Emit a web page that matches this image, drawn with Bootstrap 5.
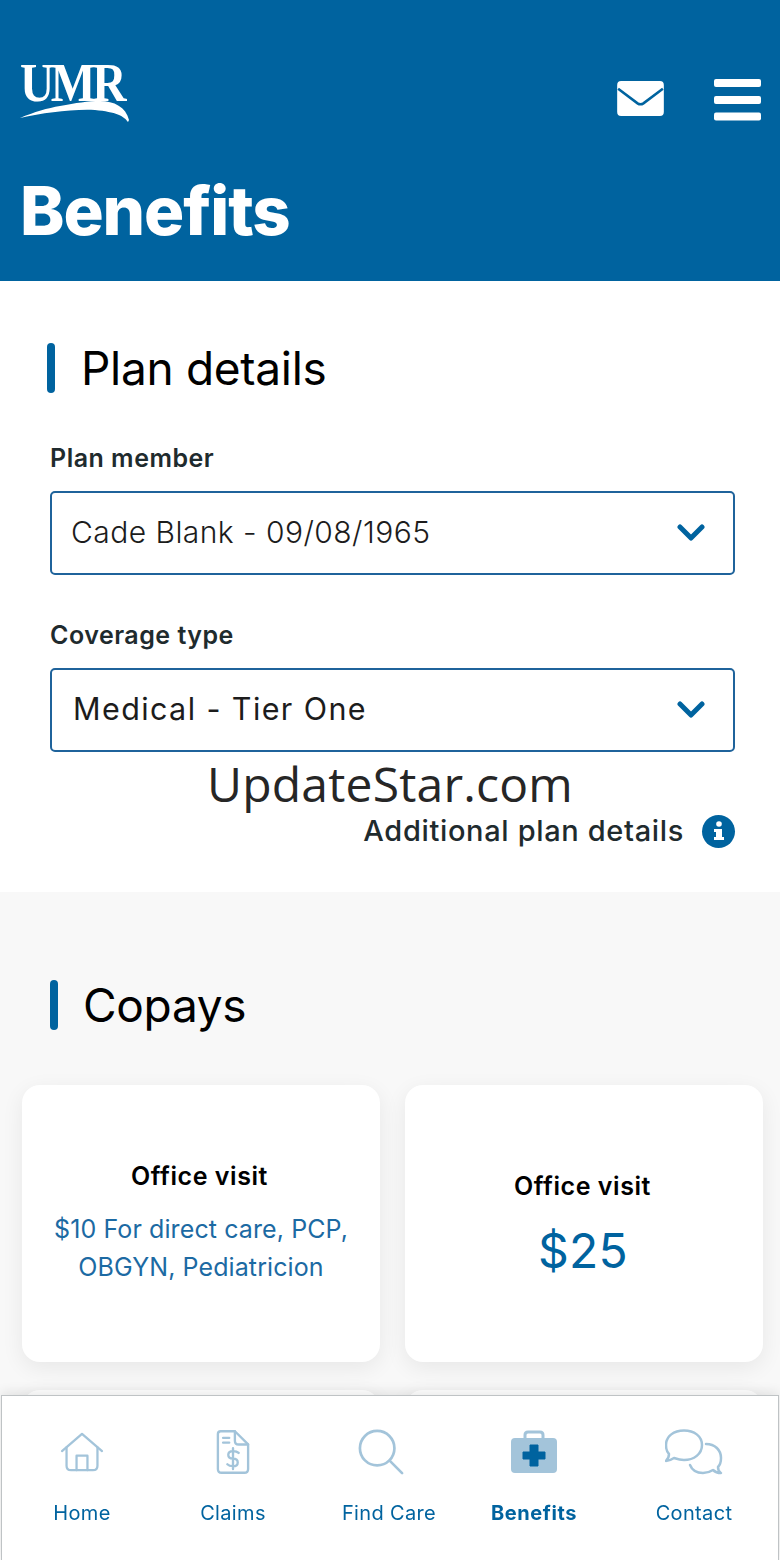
<!DOCTYPE html>
<html lang="en"><head><meta charset="utf-8"><title>Benefits</title>
<link href="https://cdn.jsdelivr.net/npm/bootstrap@5.3.0/dist/css/bootstrap.min.css" rel="stylesheet">
<style>
html,body{height:1560px;overflow:hidden}
body{width:780px;font-family:Inter,"Liberation Sans",sans-serif;background:#f8f8f8;position:relative;color:#000}
.app-head{height:281px;background:#00639f;padding:62px 19px 0 20px;color:#fff}
.logo-box{width:110px;height:60px;position:relative}
.logo-word{font-family:"Liberation Serif",serif;font-weight:700;font-size:54px;line-height:42px;letter-spacing:-4px;display:block;transform:scaleX(.88);transform-origin:left}
.logo-swoosh{position:absolute;left:0;top:30px}
.head-icons{gap:50px;margin-top:17px}
.env-ic{margin-top:2px}
.page-title{font-size:67px;font-weight:800;line-height:76px;letter-spacing:-1.1px;margin:51px 0 0;color:#fff}
.plan-sec{height:611px;background:#fff;padding:61px 45px 0 47px}
.sec-title{display:flex;align-items:center;gap:26px;font-size:46px;line-height:52px;font-weight:400;letter-spacing:-.3px;margin:0}
.sec-title::before{content:"";width:8px;height:50px;border-radius:4px;background:#00639f}
.fld-label{font-size:25px;font-weight:600;line-height:30px;color:#1f2b2e;margin:0 0 18px 3px;letter-spacing:.5px;display:block}
.fld-box{height:84px;width:685px;margin-left:3px;border:2px solid #1f639b;border-radius:5px;display:flex;align-items:center;justify-content:space-between;padding:0 28px 2px 19px;font-size:30.5px;color:#1c1c1c}
.fld-box svg{margin-top:2px}
.fld-one{margin-top:49px}
.fld-one .fld-box span{font-size:30px;font-weight:300;letter-spacing:.45px}
.fld-two{margin-top:45px}
.fld-two .fld-box span{margin-left:2px;letter-spacing:1.4px}
.wm{margin:2px 0 1px -2px;text-align:center;font-family:"Open Sans","Noto Sans",sans-serif;font-size:48px;line-height:60px;color:#262626;letter-spacing:.2px}
.more-row{margin-top:-2px;display:flex;align-items:center;justify-content:flex-end;gap:18px;font-size:29px;line-height:36px;font-weight:500;color:#1f2b2e;letter-spacing:.65px}
.info-dot{width:33px;height:33px;border-radius:50%;background:#00639f;color:#fff;display:flex;align-items:center;justify-content:center}
.copay-sec{padding:87px 17px 0 22px}
.copay-sec .sec-title{margin-left:28px;margin-bottom:54px;gap:25px}
.tile-row{display:grid;grid-template-columns:358px 358px;gap:25px}
.tile{height:277px;background:#fff;border:0;border-radius:18px;box-shadow:0 6px 22px rgba(0,0,0,.07);display:flex;flex-direction:column;align-items:center;justify-content:center;text-align:center}
.tile-left{padding-top:9px}
.tile-right{padding-top:17px}
.tile-h{font-size:25px;font-weight:600;letter-spacing:.55px;line-height:32px;color:#000;padding-right:3px}
.tile-txt{font-size:25px;line-height:38px;color:#1c6aa3;letter-spacing:.1px;margin-top:18px;margin-bottom:10px}
.tile-amt{font-size:48px;line-height:58px;color:#00639f;margin-top:20px;margin-bottom:14px;letter-spacing:.2px;padding-right:2px}
.tile-row.second{margin-top:28px}
.tile-row.second .tile{height:100px}
.tab-bar{position:fixed;left:1px;right:1px;top:1395px;height:165px;background:#fff;border:1px solid #bfc3c5;border-bottom:0;box-shadow:0 -4px 10px rgba(0,0,0,.08);display:grid;grid-template-columns:160px 142px 170px 120px 184px;padding-top:33px}
.tab-it{display:flex;flex-direction:column;align-items:center;font-size:20px;line-height:26px;color:#00639f;letter-spacing:.35px;white-space:nowrap}
.tab-slot{height:46px;margin-bottom:25px;display:flex;align-items:center;justify-content:center}
.tab-find svg{margin-right:16px}
.tab-last{padding-left:16px}
.tab-it.on span{font-weight:700;letter-spacing:.6px}
</style></head>
<body>
<header class="app-head">
  <div class="d-flex justify-content-between align-items-start">
    <div class="logo-box">
      <span class="logo-word">UMR</span>
      <svg class="logo-swoosh" width="112" height="32" viewBox="0 0 112 32"><path d="M0 26 C14 20 28 16 40 14 C56 11 68 9 80 9 C94 9 106 15 109 28 L108 30 C104 24 96 20 75 18 C50 17 24 21 0 26 Z" fill="#fff"/></svg>
    </div>
    <div class="d-flex head-icons align-items-start">
      <svg class="env-ic" width="47" height="35" viewBox="0 0 48 36"><rect width="48" height="36" rx="4" fill="#fff"/><path d="M1 8 L21 23 Q24 25 27 23 L47 8" fill="none" stroke="#00639f" stroke-width="2.6"/></svg>
      <svg width="47" height="42" viewBox="0 0 47 42"><g fill="#fff"><rect width="47" height="8" rx="2"/><rect y="17" width="47" height="8" rx="2"/><rect y="33.500" width="47" height="8" rx="2"/></g></svg>
    </div>
  </div>
  <h1 class="page-title">Benefits</h1>
</header>
<section class="plan-sec">
  <h2 class="sec-title">Plan details</h2>
  <div class="fld-one">
    <label class="fld-label">Plan member</label>
    <div class="fld-box"><span>Cade Blank - 09/08/1965</span><svg width="28" height="18" viewBox="0 0 28 18"><path d="M3 3 L14 14 L25 3" fill="none" stroke="#00639f" stroke-width="5" stroke-linecap="round" stroke-linejoin="round"/></svg></div>
  </div>
  <div class="fld-two">
    <label class="fld-label">Coverage type</label>
    <div class="fld-box"><span>Medical - Tier One</span><svg width="28" height="18" viewBox="0 0 28 18"><path d="M3 3 L14 14 L25 3" fill="none" stroke="#00639f" stroke-width="5" stroke-linecap="round" stroke-linejoin="round"/></svg></div>
  </div>
  <div class="wm">UpdateStar.com</div>
  <div class="more-row"><span>Additional plan details</span><span class="info-dot"><svg width="14" height="20" viewBox="0 0 14 20"><g fill="#fff"><circle cx="7" cy="3" r="2.800"/><path d="M2 8h8v8h2v3H2v-3h2v-5H2z"/></g></svg></span></div>
</section>
<section class="copay-sec">
  <h2 class="sec-title">Copays</h2>
  <div class="tile-row">
    <div class="card tile tile-left"><div class="tile-h">Office visit</div><div class="tile-txt">$10 For direct care, PCP,<br>OBGYN, Pediatricion</div></div>
    <div class="card tile tile-right"><div class="tile-h">Office visit</div><div class="tile-amt">$25</div></div>
  </div>
  <div class="tile-row second"><div class="card tile"></div><div class="card tile"></div></div>
</section>
<nav class="tab-bar">
  <div class="tab-it"><div class="tab-slot">
    <svg width="46" height="40" viewBox="0 0 48 44" fill="none" stroke="#a3c4da" stroke-width="2.500" stroke-linejoin="round" stroke-linecap="round"><path d="M2 21 L24 2 L46 21"/><path d="M7 17 V37 Q7 42 12 42 H36 Q41 42 41 37 V17"/><path d="M18 42 V26 H30 V42"/></svg></div>
    <span>Home</span></div>
  <div class="tab-it"><div class="tab-slot">
    <svg width="34" height="46" viewBox="0 0 36 48" fill="none" stroke="#a3c4da" stroke-width="2.500" stroke-linejoin="round" stroke-linecap="round"><path d="M5 2 H20 L34 16 V42 Q34 46 30 46 H6 Q2 46 2 42 V5 Q2 2 5 2 Z"/><path d="M20 2 V12 Q20 16 24 16 H34"/><path d="M7.500 9 H14 M7.500 14 H14"/><path d="M24 25 Q22 23 18 23 Q13 23 13 27 Q13 31 18 31 Q23 31 23 35 Q23 39 18 39 Q14 39 12 37 M18 20 V42"/></svg></div>
    <span>Claims</span></div>
  <div class="tab-it tab-find"><div class="tab-slot">
    <svg width="48" height="46" viewBox="0 0 48 48" fill="none" stroke="#a3c4da" stroke-width="2.800" stroke-linecap="round"><circle cx="20" cy="20" r="18"/><path d="M33 33 L46 46"/></svg></div>
    <span>Find Care</span></div>
  <div class="tab-it on"><div class="tab-slot">
    <svg width="46" height="44" viewBox="0 0 46 44"><path d="M14 8 V5 Q14 2 17 2 H29 Q32 2 32 5 V8" fill="none" stroke="#a3c4da" stroke-width="3"/><rect y="8" width="46" height="35" rx="4" fill="#a3c4da"/><path d="M19 15 H27 V22 H34 V29 H27 V36 H19 V29 H12 V22 H19 Z" fill="#00639f" stroke="#00639f" stroke-linejoin="round" stroke-width="1"/></svg></div>
    <span>Benefits</span></div>
  <div class="tab-it tab-last"><div class="tab-slot">
    <svg width="58" height="46" viewBox="0 0 58 46" fill="none" stroke="#a3c4da" stroke-width="2.500" stroke-linejoin="round" stroke-linecap="round"><path d="M19 1.500 C29 1.500 37 7 37 16 C37 25 29 31 19 31 C15 31 12 30 9 29 C6 31 4 32 1 32 C3 30 4 28 4 25 C1 22 1 19 1 16 C1 7 9 1.500 19 1.500 Z"/><path d="M41 15 C50 15 56 21 56 29 C56 33 55 36 53 38 C53 41 54 43 56 44 C53 44 50 43 48 41 C45 43 42 44 38 44 C32 44 27 41 25 36"/></svg></div>
    <span>Contact</span></div>
</nav>
</body></html>
